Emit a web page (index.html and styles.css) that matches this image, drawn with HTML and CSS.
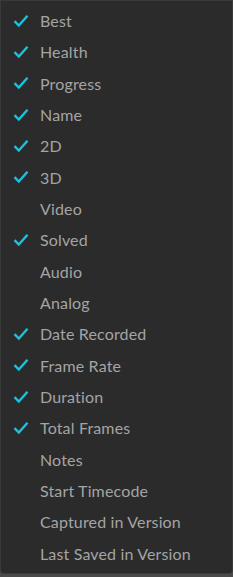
FILE: index.html
```html
<!DOCTYPE html>
<html lang="en">
<head>
    <meta charset="UTF-8">
    <title>columns menu</title>
    <link rel="stylesheet" href="styles.css">
</head>
<body>
<div class="menu">
    <div class="item on"><span class="tick"></span>Best</div>
    <div class="item on"><span class="tick"></span>Health</div>
    <div class="item on"><span class="tick"></span>Progress</div>
    <div class="item on"><span class="tick"></span>Name</div>
    <div class="item on"><span class="tick"></span>2D</div>
    <div class="item on"><span class="tick"></span>3D</div>
    <div class="item"><span class="tick"></span>Video</div>
    <div class="item on"><span class="tick"></span>Solved</div>
    <div class="item"><span class="tick"></span>Audio</div>
    <div class="item"><span class="tick"></span>Analog</div>
    <div class="item on"><span class="tick"></span>Date Recorded</div>
    <div class="item on"><span class="tick"></span>Frame Rate</div>
    <div class="item on"><span class="tick"></span>Duration</div>
    <div class="item on"><span class="tick"></span>Total Frames</div>
    <div class="item"><span class="tick"></span>Notes</div>
    <div class="item"><span class="tick"></span>Start Timecode</div>
    <div class="item"><span class="tick"></span>Captured in Version</div>
    <div class="item"><span class="tick"></span>Last Saved in Version</div>
</div>
<script>
    // put the check mark into every ticked row
    var ticks = document.querySelectorAll(".item.on .tick");
    for (var i = 0; i < ticks.length; i++) {
        ticks[i].innerHTML = '<svg width="16" height="14" viewBox="0 0 16 14"><path d="M1.5 7.2 L5.8 11.5 L14.5 1.8" fill="none" stroke="#1bc3dc" stroke-width="2.4"/></svg>';
    }
</script>
</body>
</html>
```

FILE: styles.css
```css
html, body {
    margin: 0;
    padding: 0;
}

body {
    width: 233px;
    height: 577px;
    background-color: #4a4a4a;
    font-family: Lato, "Open Sans", sans-serif;
}

.menu {
    height: 574px;
    box-sizing: border-box;
    padding-top: 4px;
    background-color: #2b2b2b;
    border: 1px solid #3a3a3a;
    border-radius: 0 0 4px 4px;
}

.item {
    display: flex;
    align-items: center;
    height: 31.33px;
    color: #a4a4a4;
    font-size: 16px;
    letter-spacing: 0.15px;
}

.tick {
    display: flex;
    width: 16px;
    height: 14px;
    margin-left: 12px;
    margin-right: 11px;
}
```
